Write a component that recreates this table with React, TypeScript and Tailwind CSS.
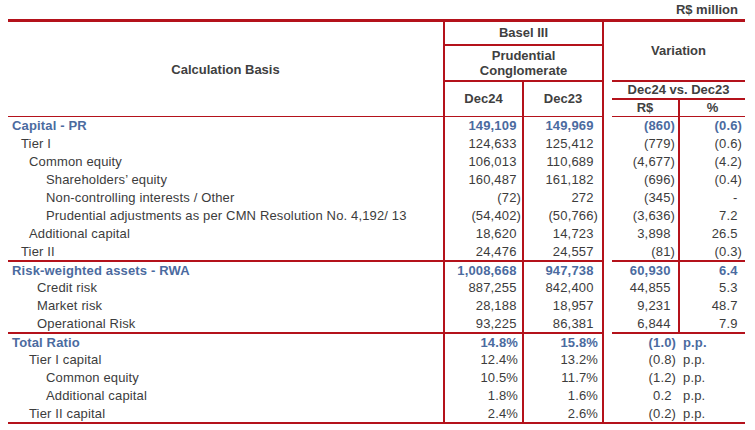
import React from "react";

type Row = {
  label: string;
  pad: string;
  blue?: boolean;
  v: string[];
};

const capital: Row[] = [
  { label: "Capital - PR", pad: "pl-[4px]", blue: true, v: ["149,109", "149,969", "(860)", "(0.6)"] },
  { label: "Tier I", pad: "pl-[13px]", v: ["124,633", "125,412", "(779)", "(0.6)"] },
  { label: "Common equity", pad: "pl-[21px]", v: ["106,013", "110,689", "(4,677)", "(4.2)"] },
  { label: "Shareholders’ equity", pad: "pl-[38px]", v: ["160,487", "161,182", "(696)", "(0.4)"] },
  { label: "Non-controlling interests / Other", pad: "pl-[38px]", v: ["(72)", "272", "(345)", "-"] },
  {
    label: "Prudential adjustments as per CMN Resolution No. 4,192/ 13",
    pad: "pl-[38px]",
    v: ["(54,402)", "(50,766)", "(3,636)", "7.2"],
  },
  { label: "Additional capital", pad: "pl-[21px]", v: ["18,620", "14,723", "3,898", "26.5"] },
  { label: "Tier II", pad: "pl-[13px]", v: ["24,476", "24,557", "(81)", "(0.3)"] },
];

const rwa: Row[] = [
  { label: "Risk-weighted assets - RWA", pad: "pl-[4px]", blue: true, v: ["1,008,668", "947,738", "60,930", "6.4"] },
  { label: "Credit risk", pad: "pl-[29px]", v: ["887,255", "842,400", "44,855", "5.3"] },
  { label: "Market risk", pad: "pl-[29px]", v: ["28,188", "18,957", "9,231", "48.7"] },
  { label: "Operational Risk", pad: "pl-[29px]", v: ["93,225", "86,381", "6,844", "7.9"] },
];

const ratio: Row[] = [
  { label: "Total Ratio", pad: "pl-[4px]", blue: true, v: ["14.8%", "15.8%", "(1.0)"] },
  { label: "Tier I capital", pad: "pl-[21px]", v: ["12.4%", "13.2%", "(0.8)"] },
  { label: "Common equity", pad: "pl-[38px]", v: ["10.5%", "11.7%", "(1.2)"] },
  { label: "Additional capital", pad: "pl-[38px]", v: ["1.8%", "1.6%", "0.2"] },
  { label: "Tier II capital", pad: "pl-[21px]", v: ["2.4%", "2.6%", "(0.2)"] },
];

function Num({ s }: { s: string }) {
  return (
    <>
      {s}
      {!s.endsWith(")") && <span className="invisible">)</span>}
    </>
  );
}

function ValueRows({ rows }: { rows: Row[] }) {
  return (
    <>
      {rows.map((r, i) => {
        const b = i === rows.length - 1 ? "border-b-2" : "";
        const tone = r.blue ? "text-[#4b6b9f] font-bold" : "text-[#3c3c3c]";
        return (
          <tr key={r.label + i} className={`h-[18px] tracking-[0.15px] ${tone}`}>
            <td className={`${r.pad} border-r-2 ${b} whitespace-nowrap`}>{r.label}</td>
            <td className={`text-right pr-[1px] border-r-2 ${b}`}>
              <Num s={r.v[0]} />
            </td>
            <td className={`text-right pr-[4px] border-r-2 ${b}`}>
              <Num s={r.v[1]} />
            </td>
            <td></td>
            <td className={`text-right pr-[3px] border-r-2 ${b}`}>
              <Num s={r.v[2]} />
            </td>
            <td className={`text-right pr-[3px] ${b}`}>
              <Num s={r.v[3]} />
            </td>
          </tr>
        );
      })}
    </>
  );
}

function RatioRows({ rows }: { rows: Row[] }) {
  return (
    <>
      {rows.map((r, i) => {
        const b = i === rows.length - 1 ? "border-b-2" : "";
        const tone = r.blue ? "text-[#4b6b9f] font-bold" : "text-[#3c3c3c]";
        return (
          <tr key={r.label + i} className={`h-[18px] tracking-[0.15px] ${tone}`}>
            <td className={`${r.pad} border-r-2 ${b} whitespace-nowrap`}>{r.label}</td>
            <td className={`text-right pr-[4px] border-r-2 ${b}`}>{r.v[0]}</td>
            <td className={`text-right pr-[4px] border-r-2 ${b}`}>{r.v[1]}</td>
            <td className={b}></td>
            <td className={`text-right pr-[3px] ${b}`}>
              <Num s={r.v[2]} />
            </td>
            <td className={`text-left pl-[4px] ${b}`}>p.p.</td>
          </tr>
        );
      })}
    </>
  );
}

export default function App() {
  return (
    <div className="w-[755px] h-[430px] bg-white font-['Liberation_Sans',Arial,sans-serif] text-[13px] overflow-hidden">
      <div className="h-[19px] flex items-center justify-end pr-[17px] font-bold text-[#404040]">R$ million</div>
      <table className="ml-[8px] w-[737px] table-fixed border-collapse border-t-[3px] border-[#b4121b] [&_td]:border-[#b4121b] [&_td]:leading-[15px]">
        <colgroup>
          <col className="w-[436px]" />
          <col className="w-[79px]" />
          <col className="w-[80px]" />
          <col className="w-[9px]" />
          <col className="w-[67px]" />
          <col className="w-[66px]" />
        </colgroup>
        <tbody>
          <tr className="h-[24px] font-bold text-[#404040]">
            <td rowSpan={4} className="text-center border-r-2 border-b">
              Calculation Basis
            </td>
            <td colSpan={2} className="text-center border-r-2 border-b-2">
              Basel III
            </td>
            <td rowSpan={4}></td>
            <td colSpan={2} rowSpan={2} className="text-center border-b-2">
              Variation
            </td>
          </tr>
          <tr className="h-[36px] font-bold text-[#404040]">
            <td colSpan={2} className="text-center border-r-2 border-b-2 leading-[17px]">
              Prudential
              <br />
              Conglomerate
            </td>
          </tr>
          <tr className="h-[18px] font-bold text-[#404040]">
            <td rowSpan={2} className="text-center border-r-2 border-b">
              Dec24
            </td>
            <td rowSpan={2} className="text-center border-r-2 border-b">
              Dec23
            </td>
            <td colSpan={2} className="text-center border-b-2">
              Dec24 vs. Dec23
            </td>
          </tr>
          <tr className="h-[18px] font-bold text-[#404040]">
            <td className="text-center border-r-2 border-b">R$</td>
            <td className="text-center border-b">%</td>
          </tr>
          <ValueRows rows={capital} />
          <ValueRows rows={rwa} />
          <RatioRows rows={ratio} />
        </tbody>
      </table>
    </div>
  );
}
